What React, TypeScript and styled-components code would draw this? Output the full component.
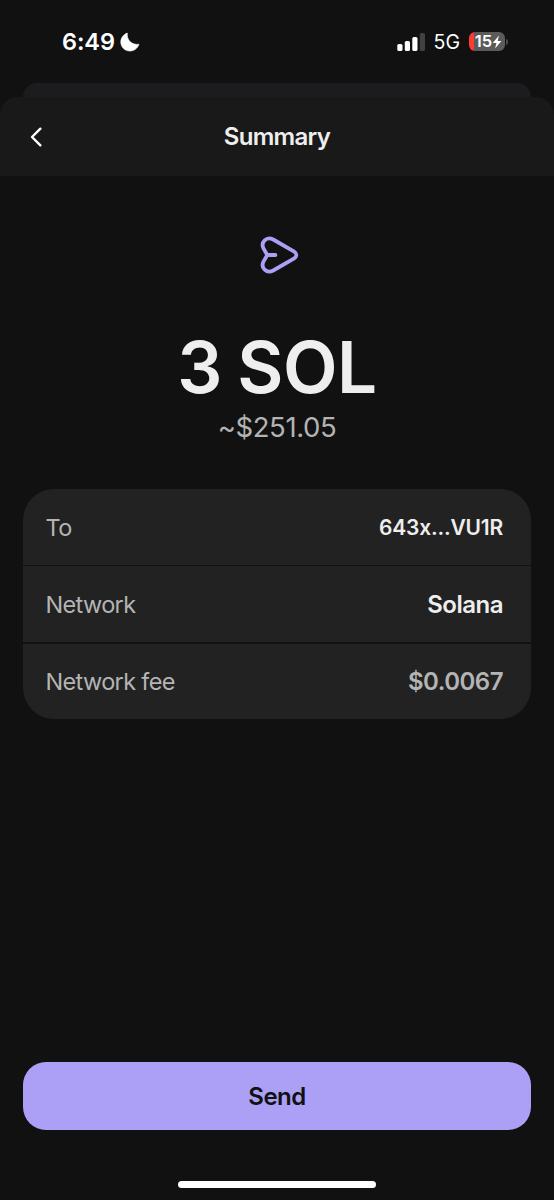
import React from "react";
import styled, { createGlobalStyle } from "styled-components";

const GlobalStyle = createGlobalStyle`
  *, *::before, *::after { box-sizing: border-box; }
  body { margin: 0; background: #111111; }
`;

const Screen = styled.div`
  width: 554px;
  height: 1200px;
  display: flex;
  flex-direction: column;
  background: #111111;
  color: #eeeeee;
  font-family: Inter, "Liberation Sans", sans-serif;
  overflow: hidden;
`;

const StatusBar = styled.div`
  height: 83px;
  padding: 0 46px 0 62px;
  display: flex;
  justify-content: space-between;
  color: #ffffff;
`;

const StatusGroup = styled.div`
  height: 83px;
  display: flex;
  align-items: center;
`;

const Time = styled.span`
  font-size: 23.5px;
  font-weight: 600;
  line-height: 30px;
  letter-spacing: -0.1px;
  margin-right: 5px;
`;

const Carrier = styled.span`
  font-size: 19.5px;
  line-height: 30px;
  letter-spacing: 0;
  margin: 0 9px 0 8px;
`;

const Battery = styled.div`
  width: 36px;
  height: 19px;
  padding-left: 3px;
  border-radius: 6px;
  background: linear-gradient(90deg, #fe3b30 0 5px, #5b5b5b 5px);
  display: flex;
  align-items: center;
  justify-content: center;
  font-size: 16.5px;
  font-weight: 600;
  line-height: 19px;
  letter-spacing: 0;
`;

const BatteryCap = styled.div`
  width: 2px;
  height: 6px;
  margin-left: 1px;
  border-radius: 0 2px 2px 0;
  background: #4a4a4a;
`;

const BackSheet = styled.div`
  height: 14px;
  margin: 0 23px;
  border-radius: 14px 14px 0 0;
  background: #1c1c1e;
`;

const Header = styled.header`
  height: 79px;
  padding: 0 24px;
  display: grid;
  grid-template-columns: 24px 1fr 24px;
  align-items: center;
  border-radius: 18px 18px 0 0;
  background: #191919;
`;

const Title = styled.h1`
  margin: 0;
  text-align: center;
  font-size: 24px;
  font-weight: 600;
  line-height: 30px;
  letter-spacing: -0.7px;
`;

const BackButton = styled.button`
  width: 24px;
  height: 24px;
  padding: 0;
  border: 0;
  background: none;
  display: flex;
`;

const Hero = styled.section`
  height: 313px;
  padding-top: 56px;
  display: flex;
  flex-direction: column;
  align-items: center;
`;

const Amount = styled.div`
  margin-top: 47px;
  font-size: 71px;
  font-weight: 600;
  line-height: 84px;
  letter-spacing: -0.5px;
  word-spacing: -2px;
`;

const FiatAmount = styled.div`
  font-size: 27.5px;
  line-height: 36px;
  letter-spacing: -0.4px;
  color: #b3b3b3;
`;

const Card = styled.dl`
  margin: 0 23px;
  height: 230px;
  display: grid;
  grid-template-rows: 75.75px 76px 75.25px;
  row-gap: 1.5px;
  border-radius: 31px;
  overflow: hidden;
`;

const Row = styled.div`
  padding: 2px 28px 0 22.5px;
  display: flex;
  align-items: center;
  justify-content: space-between;
  background: #222222;
`;

const Label = styled.dt`
  font-size: 23.5px;
  line-height: 30px;
  letter-spacing: -0.65px;
  color: #b4b4b4;
`;

const Value = styled.dd<{ $muted?: boolean; $size?: number; $tracking?: number }>`
  margin: 0;
  font-size: ${(p) => p.$size ?? 24}px;
  font-weight: 600;
  line-height: 30px;
  letter-spacing: ${(p) => p.$tracking ?? -0.5}px;
  color: ${(p) => (p.$muted ? "#b4b4b4" : "#eeeeee")};
`;

const Footer = styled.footer`
  margin-top: auto;
  height: 138px;
  padding: 0 23px;
  display: flex;
  flex-direction: column;
  align-items: center;
`;

const SendButton = styled.button`
  width: 100%;
  height: 68px;
  padding: 1px 0 0;
  border: 0;
  border-radius: 23px;
  background: #ab9ff6;
  color: #111111;
  font-family: inherit;
  font-size: 24px;
  font-weight: 600;
  line-height: 30px;
  letter-spacing: -0.5px;
`;

const HomeIndicator = styled.div`
  width: 198px;
  height: 7px;
  margin-top: 51px;
  border-radius: 4px;
  background: #ffffff;
`;

const MoonIcon = () => (
  <svg width="20" height="20" viewBox="0 0 20 20" fill="#fff">
    <path d="M7.3 1.1C6.5 7.7 11.5 13.5 19 12.2C17.4 16.6 14 19 9.8 19C4.7 19 .8 15.1 .8 10.1C.8 6 3.4 2.5 7.3 1.1Z" stroke="#fff" strokeWidth=".6" strokeLinejoin="round" />
  </svg>
);

const SignalIcon = () => (
  <svg width="29" height="18" viewBox="0 0 29 18" fill="#fff">
    <rect x="0.3" y="11" width="5.2" height="7" rx="1.6" />
    <rect x="7.8" y="8" width="5.2" height="10" rx="1.6" />
    <rect x="15.3" y="4" width="5.2" height="14" rx="1.6" />
    <rect x="22.8" y="0" width="5.2" height="18" rx="1.6" fill="#414141" />
  </svg>
);

const BoltIcon = () => (
  <svg width="10" height="14" viewBox="0 0 9 13" fill="#fff">
    <path d="M6.3.5.5 7.4H4L2.7 12.5 8.6 5.6H5.1Z" />
  </svg>
);

const BackIcon = () => (
  <svg width="24" height="24" viewBox="0 0 24 24" fill="none" stroke="#fff" strokeWidth="2.4" strokeLinecap="round" strokeLinejoin="round">
    <path d="M16.4 3.7 8 12l8.4 8.3" />
  </svg>
);

const SendIcon = () => (
  <svg width="46" height="46" viewBox="0 0 46 46" fill="none" stroke="#ab9ff6" strokeWidth="3.8" strokeLinecap="round" strokeLinejoin="round">
    <path d="M19.2 7.5 39.8 19.3Q45 23 39.8 26.7L19.2 38.5C12.6 42 6.2 35.8 9.6 29.4L13.3 23 9.6 16.6C6.2 10.2 12.6 4 19.2 7.5Z" />
    <path d="M13.5 23h7.9" />
  </svg>
);

export default function App() {
  return (
    <>
      <GlobalStyle />
      <Screen>
        <StatusBar>
          <StatusGroup>
            <Time>6:49</Time>
            <MoonIcon />
          </StatusGroup>
          <StatusGroup>
            <SignalIcon />
            <Carrier>5G</Carrier>
            <Battery>
              15
              <BoltIcon />
            </Battery>
            <BatteryCap />
          </StatusGroup>
        </StatusBar>
        <BackSheet />
        <Header>
          <BackButton aria-label="Back">
            <BackIcon />
          </BackButton>
          <Title>Summary</Title>
        </Header>
        <Hero>
          <SendIcon />
          <Amount>3 SOL</Amount>
          <FiatAmount>~$251.05</FiatAmount>
        </Hero>
        <Card>
          <Row>
            <Label>To</Label>
            <Value $size={21} $tracking={-0.2}>643x...VU1R</Value>
          </Row>
          <Row>
            <Label>Network</Label>
            <Value>Solana</Value>
          </Row>
          <Row>
            <Label>Network fee</Label>
            <Value $muted>$0.0067</Value>
          </Row>
        </Card>
        <Footer>
          <SendButton>Send</SendButton>
          <HomeIndicator />
        </Footer>
      </Screen>
    </>
  );
}
